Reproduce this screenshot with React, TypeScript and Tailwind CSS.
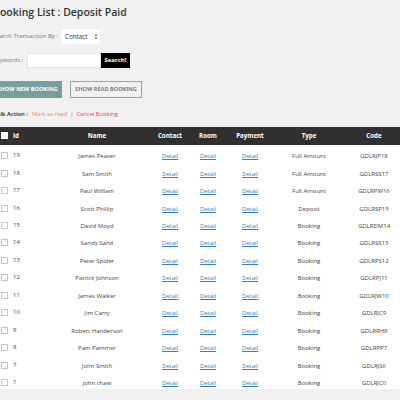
import React from 'react';

type Booking = {
  id: number;
  name: string;
  type: string;
  code: string;
};

const bookings: Booking[] = [
  { id: 19, name: 'James Peaser', type: 'Full Amount', code: 'GDLRJP18' },
  { id: 18, name: 'Sam Smith', type: 'Full Amount', code: 'GDLRSS17' },
  { id: 17, name: 'Paul William', type: 'Full Amount', code: 'GDLRPW16' },
  { id: 16, name: 'Scott Phillip', type: 'Deposit', code: 'GDLRSP15' },
  { id: 15, name: 'David Moyd', type: 'Booking', code: 'GDLRDM14' },
  { id: 14, name: 'Sandy Sand', type: 'Booking', code: 'GDLRSS13' },
  { id: 13, name: 'Peter Spider', type: 'Booking', code: 'GDLRPS12' },
  { id: 12, name: 'Patrick Johnson', type: 'Booking', code: 'GDLRPJ11' },
  { id: 11, name: 'James Walker', type: 'Booking', code: 'GDLRJW10' },
  { id: 10, name: 'Jim Carry', type: 'Booking', code: 'GDLRJC9' },
  { id: 9, name: 'Robert Handerson', type: 'Booking', code: 'GDLRRH8' },
  { id: 8, name: 'Pam Pammer', type: 'Booking', code: 'GDLRPP7' },
  { id: 7, name: 'John Smith', type: 'Booking', code: 'GDLRJS6' },
  { id: 1, name: 'john chaw', type: 'Booking', code: 'GDLRJC0' },
];

const cols = 'grid grid-cols-[56px_96px_50px_26px_58px_60px_70px]';

const Cell: React.FC<{ children: React.ReactNode }> = ({ children }) => (
  <div className="flex justify-center whitespace-nowrap">{children}</div>
);

const DetailLink: React.FC = () => (
  <a href="#" className="text-[#2f83bd] underline">
    Detail
  </a>
);

const App: React.FC = () => {
  return (
    <div className="min-h-screen w-[400px] overflow-hidden bg-[#f1f1f1] font-['Open_Sans',sans-serif]">
      <div className="-ml-[7px] w-[416px]">
        {/* Heading */}
        <h1 className="whitespace-nowrap pt-[5px] text-[10.5px] font-semibold leading-[14px] text-[#333]">
          Booking List : Deposit Paid
        </h1>

        {/* Search */}
        <div className="mt-[10px] flex items-center gap-[3px] whitespace-nowrap">
          <span className="text-[6px] text-[#7a7a7a]">Search Transaction By :</span>
          <div className="flex h-[15px] w-[39px] items-center justify-between rounded-[2px] bg-white pl-[4px] pr-[2px] text-[6.3px] text-[#333]">
            <span>Contact</span>
            <svg width="4" height="7" viewBox="0 0 4 7">
              <path d="M0.5 2.6 L2 1 L3.5 2.6 Z M0.5 4.4 L2 6 L3.5 4.4 Z" fill="#333" />
            </svg>
          </div>
        </div>

        <div className="mt-[9px] flex items-center whitespace-nowrap">
          <span className="w-[34px] text-[6px] text-[#7a7a7a]">Keywords :</span>
          <div className="h-[15px] w-[74px] border border-[#e4e4e4] bg-white" />
          <button className="h-[15px] w-[29px] bg-black text-[6px] font-bold text-white">
            Search!
          </button>
        </div>

        {/* Buttons */}
        <div className="mt-[13px] flex gap-[8px]">
          <button className="h-[17px] w-[69px] whitespace-nowrap bg-[#76a0a0] text-[5.6px] font-bold text-white">
            SHOW NEW BOOKING
          </button>
          <button className="h-[17px] w-[72px] whitespace-nowrap border border-[#8fa9aa] text-[5.6px] font-bold text-[#7d7d7d]">
            SHOW READ BOOKING
          </button>
        </div>

        {/* Bulk actions */}
        <div className="mt-[12px] flex h-[9px] items-center whitespace-nowrap text-[5.8px] leading-[9px]">
          <span className="w-[39px] font-semibold text-[#222]">Bulk Action :</span>
          <a href="#" className="text-[#f2895a]">Mark as read</a>
          <span className="mx-[3px] text-[#888]">|</span>
          <a href="#" className="text-[#e8404c]">Cancel Booking</a>
        </div>

        {/* Table */}
        <div className="mt-[7.5px] bg-white">
          <div className={`${cols} h-[18px] items-center bg-[#303030] text-[6.2px] font-bold text-white`}>
            <div className="flex items-center gap-[5px] pl-[8px]">
              <span className="h-[7px] w-[7px] bg-white" />
              <span>Id</span>
            </div>
            <Cell>Name</Cell>
            <Cell>Contact</Cell>
            <Cell>Room</Cell>
            <Cell>Payment</Cell>
            <Cell>Type</Cell>
            <Cell>Code</Cell>
          </div>

          {bookings.map((b) => (
            <div
              key={b.id}
              className={`${cols} h-[17.45px] items-start pt-[7.8px] text-[6px] leading-[9px] text-[#444]`}
            >
              <div className="-mt-[1px] flex items-center gap-[5px] pl-[8px]">
                <span className="h-[7px] w-[7px] border border-[#c8c8c8] bg-white" />
                <span>{b.id}</span>
              </div>
              <Cell>{b.name}</Cell>
              <Cell><DetailLink /></Cell>
              <Cell><DetailLink /></Cell>
              <Cell><DetailLink /></Cell>
              <Cell>{b.type}</Cell>
              <Cell>{b.code}</Cell>
            </div>
          ))}
        </div>
      </div>
    </div>
  );
};

export default App;
